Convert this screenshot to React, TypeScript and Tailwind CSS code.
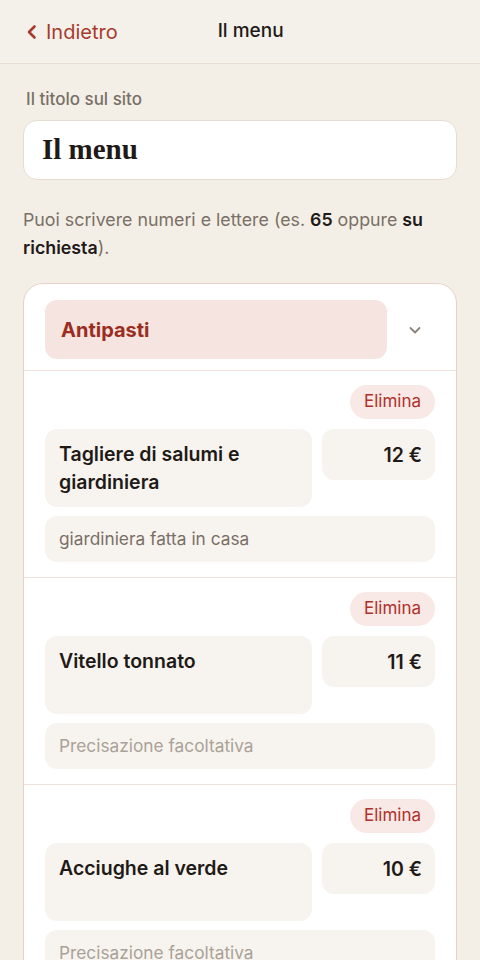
const items = [
  { name: "Tagliere di salumi e giardiniera", price: "12 €", note: "giardiniera fatta in casa" },
  { name: "Vitello tonnato", price: "11 €", note: "" },
  { name: "Acciughe al verde", price: "10 €", note: "" },
];

function ChevronLeft() {
  return (
    <svg width="12" height="16" viewBox="0 0 12 16" fill="none" className="text-[#a83a2c]">
      <path d="M8.5 2.5L3 8l5.5 5.5" stroke="currentColor" strokeWidth="2.6" strokeLinecap="round" strokeLinejoin="round" />
    </svg>
  );
}

function ChevronDown() {
  return (
    <svg width="14" height="10" viewBox="0 0 14 10" fill="none" className="text-[#8a827b]">
      <path d="M2.5 3l4.5 4.5L11.5 3" stroke="currentColor" strokeWidth="1.8" strokeLinecap="round" strokeLinejoin="round" />
    </svg>
  );
}

function MenuItem({ name, price, note }: { name: string; price: string; note: string }) {
  return (
    <div className="border-t border-[#efe2dd] px-[21px] pt-[14px] pb-[15px]">
      <div className="flex justify-end">
        <button
          type="button"
          className="h-[34px] rounded-full bg-[#f8e8e6] px-[14px] text-[17px] text-[#b0302a]"
        >
          Elimina
        </button>
      </div>
      <div className="mt-[10px] flex items-start gap-[10px]">
        <div className="min-h-[78px] flex-1 rounded-[12px] bg-[#f7f4ef] px-[14px] py-[11px] text-[19.5px] font-semibold leading-[28px] text-[#1f1a17]">
          {name}
        </div>
        <div className="w-[113px] rounded-[12px] bg-[#f7f4ef] py-[11.5px] pr-[13px] pl-[14px] text-right text-[19.5px] font-semibold leading-[28px] text-[#1f1a17]">
          {price}
        </div>
      </div>
      <div
        className={`mt-[9px] h-[46px] rounded-[12px] bg-[#f7f4ef] px-[14px] text-[17.3px] leading-[46px] ${
          note ? "text-[#7a6f66]" : "text-[#aaa198]"
        }`}
      >
        {note || "Precisazione facoltativa"}
      </div>
    </div>
  );
}

export default function App() {
  return (
    <div className="min-h-[960px] bg-[#f3efe7] font-['Inter','Liberation_Sans',sans-serif]">
      <header className="flex h-[64px] items-center border-b border-[#e6ddd2] bg-[#f4f1eb] px-[26px]">
        <button type="button" className="flex items-center gap-[8px] text-[20px] text-[#a83a2c]">
          <ChevronLeft />
          Indietro
        </button>
        <h1 className="ml-[100px] text-[19px] font-medium text-[#1f1a17]">Il menu</h1>
      </header>

      <main className="px-[23px] pt-[24px]">
        <label className="block px-[3px] text-[17px] font-medium leading-[22px] text-[#7a6f66]">Il titolo sul sito</label>
        <div className="mt-[10px] flex h-[60px] items-center rounded-[14px] border border-[#e6ddd2] bg-white px-[18px]">
          <span className="font-['Liberation_Serif','DejaVu_Serif',serif] text-[29px] font-bold text-[#1f1a17]">Il menu</span>
        </div>

        <p className="mt-[26px] text-[17.8px] leading-[28px] text-[#7a6f66]">
          Puoi scrivere numeri e lettere (es. <b className="font-semibold text-[#1f1a17]">65</b> oppure{" "}
          <b className="font-semibold text-[#1f1a17]">su richiesta</b>).
        </p>

        <section className="mt-[21px] overflow-hidden rounded-[20px] border border-[#e8d0cb] bg-white">
          <div className="flex items-center gap-[8px] px-[21px] pt-[16px] pb-[11px]">
            <div className="flex h-[59px] flex-1 items-center rounded-[12px] bg-[#f6e4e1] px-[16px] text-[20px] font-bold text-[#9b2d20]">
              Antipasti
            </div>
            <div className="flex w-[40px] justify-center">
              <ChevronDown />
            </div>
          </div>
          {items.map((it) => (
            <MenuItem key={it.name} {...it} />
          ))}
        </section>
      </main>
    </div>
  );
}
